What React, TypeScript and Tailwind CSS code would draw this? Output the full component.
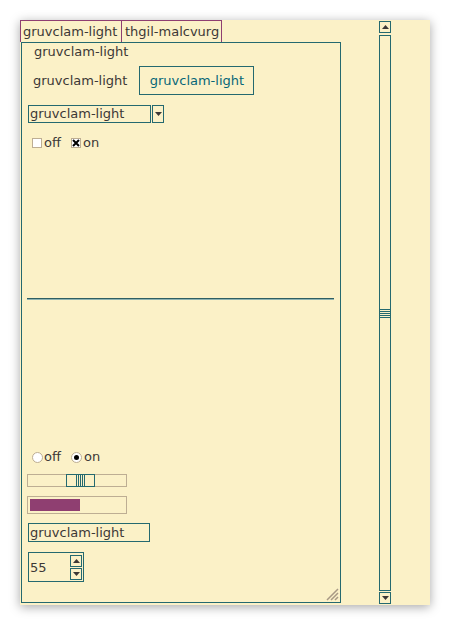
import React from 'react';

const font = { fontFamily: '"DejaVu Sans", sans-serif' };

function Arrow({ up }: { up?: boolean }) {
  return (
    <svg width="7" height="4" viewBox="0 0 7 4">
      <polygon points={up ? '0,4 7,4 3.5,0' : '0,0 7,0 3.5,4'} fill="#3c3836" />
    </svg>
  );
}

function CheckBox({ checked }: { checked?: boolean }) {
  return (
    <span className="flex h-[10px] w-[10px] items-center justify-center border border-[#bdae93] bg-white">
      {checked && (
        <svg width="8" height="8" viewBox="0 0 8 8">
          <path d="M1 1L7 7M7 1L1 7" stroke="#000" strokeWidth="2" />
        </svg>
      )}
    </span>
  );
}

function Radio({ checked }: { checked?: boolean }) {
  return (
    <span className="flex h-[11px] w-[11px] items-center justify-center rounded-full border border-[#bdae93] bg-white">
      {checked && <span className="h-[5px] w-[5px] rounded-full bg-black" />}
    </span>
  );
}

export default function App() {
  return (
    <div className="h-[625px] w-[450px] bg-white pl-[20px] pt-[20px] text-[13px] text-[#3c3836]" style={font}>
      <div className="flex h-[585px] w-[410px] bg-[#fbf1c7] shadow-[0_2px_10px_rgba(0,0,0,0.35)]">
        <div className="flex flex-col">
          <div className="flex h-[22px]">
            <div className="flex w-[102px] items-center border-x border-t border-[#8f3f71] pl-[2px] leading-none">
              gruvclam-light
            </div>
            <div className="-ml-px flex w-[101px] items-center border-x border-t border-[#8f3f71] pl-[3px] leading-none">
              thgil-malcvurg
            </div>
          </div>
          <div className="relative ml-px flex h-[561px] w-[320px] flex-col border border-[#24696f]">
            <div className="flex h-[18px] items-center pl-[12px]">gruvclam-light</div>
            <div className="mt-[5px] flex h-[29px] items-center">
              <span className="pl-[11px]">gruvclam-light</span>
              <span className="ml-[12px] flex h-[29px] w-[115px] items-center justify-center border border-[#24696f] text-[#076678]">
                gruvclam-light
              </span>
            </div>
            <div className="mt-[10px] flex h-[18px] pl-[6px]">
              <span className="flex w-[123px] items-center border border-[#24696f] pl-[1px]">gruvclam-light</span>
              <span className="ml-px flex w-[12px] items-center justify-center border border-[#24696f]">
                <Arrow />
              </span>
            </div>
            <div className="mt-[11px] flex h-[18px] items-center pl-[10px]">
              <CheckBox />
              <span className="ml-[2px]">off</span>
              <span className="ml-[10px]">
                <CheckBox checked />
              </span>
              <span className="ml-[2px]">on</span>
            </div>
            <div className="ml-[5px] mt-[146px] w-[307px]">
              <div className="h-px bg-[#2f5f63]" />
              <div className="h-px bg-[#8fb3b0]" />
            </div>
            <div className="mt-[148px] flex h-[18px] items-center pl-[10px]">
              <Radio />
              <span className="ml-[1px]">off</span>
              <span className="ml-[10px]">
                <Radio checked />
              </span>
              <span className="ml-[2px]">on</span>
            </div>
            <div className="ml-[5px] mt-[8px] flex h-[13px] w-[100px] items-center border border-[#bdae93]">
              <div className="ml-[38px] flex h-[13px] w-[29px] items-center justify-center gap-[1px] border border-[#24696f] bg-[#fbf1c7]">
                <span className="h-[11px] w-px bg-[#24696f]" />
                <span className="h-[11px] w-px bg-[#24696f]" />
                <span className="h-[11px] w-px bg-[#24696f]" />
                <span className="h-[11px] w-px bg-[#24696f]" />
                <span className="h-[11px] w-px bg-[#24696f]" />
              </div>
            </div>
            <div className="ml-[5px] mt-[9px] flex h-[18px] w-[100px] items-center border border-[#bdae93] px-[2px]">
              <div className="h-[12px] w-[50px] bg-[#8f3f71]" />
            </div>
            <div className="ml-[6px] mt-[9px] flex h-[19px] w-[122px] items-center border border-[#24696f] pl-[1px]">
              gruvclam-light
            </div>
            <div className="ml-[6px] mt-[10px] flex h-[30px] w-[56px] items-center justify-between border border-[#24696f] pl-[1px] pr-[1px]">
              <span className="mt-[1px]">55</span>
              <div className="flex flex-col gap-[1px]">
                <span className="flex h-[12px] w-[12px] items-center justify-center border border-[#24696f]">
                  <Arrow up />
                </span>
                <span className="flex h-[12px] w-[12px] items-center justify-center border border-[#24696f]">
                  <Arrow />
                </span>
              </div>
            </div>
            <svg className="absolute bottom-[1px] right-[1px]" width="14" height="14" viewBox="0 0 14 14">
              <path d="M13 2L2 13M13 6L6 13M13 10L10 13" stroke="#a89984" strokeWidth="1.5" />
            </svg>
          </div>
        </div>
        <div className="ml-[38px] flex w-[12px] flex-col pt-px">
          <span className="flex h-[12px] w-[12px] items-center justify-center border border-[#24696f]">
            <Arrow up />
          </span>
          <div className="mt-[2px] flex h-[556px] w-[12px] items-center justify-center border border-[#24696f]">
            <div className="flex w-[10px] flex-col gap-[1px]">
              <span className="h-px bg-[#24696f]" />
              <span className="h-px bg-[#24696f]" />
              <span className="h-px bg-[#24696f]" />
              <span className="h-px bg-[#24696f]" />
              <span className="h-px bg-[#24696f]" />
            </div>
          </div>
          <span className="mt-[1px] flex h-[12px] w-[12px] items-center justify-center border border-[#24696f]">
            <Arrow />
          </span>
        </div>
      </div>
    </div>
  );
}
